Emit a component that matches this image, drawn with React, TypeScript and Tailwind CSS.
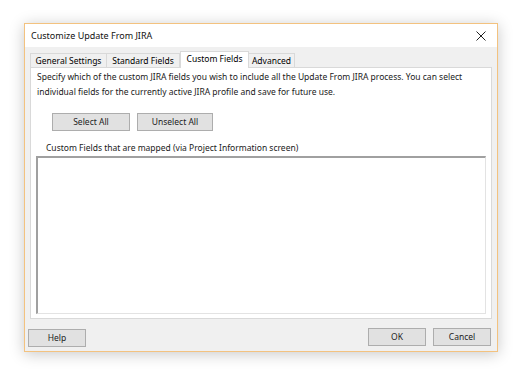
const font = { fontFamily: '"Noto Sans", "Segoe UI", sans-serif' };

function WinButton({ label, className }: { label: string; className: string }) {
  return (
    <button className={`h-[18px] bg-[#e1e1e1] border border-[#adadad] text-[8.5px] leading-none text-[#222] flex items-center justify-center ${className}`}>
      {label}
    </button>
  );
}

function Tab({ label, active, className }: { label: string; active?: boolean; className: string }) {
  if (active) {
    return (
      <div className={`h-[17px] bg-white border border-b-0 border-[#d9d9d9] flex items-start justify-center pt-[1px] text-[8.5px] leading-[12px] whitespace-nowrap relative z-10 -mb-px ${className}`}>
        {label}
      </div>
    );
  }
  return (
    <div className={`h-[14px] bg-[#f0f0f0] border border-b-0 border-[#d9d9d9] flex items-end justify-center text-[8.5px] leading-[12px] whitespace-nowrap ${className}`}>
      {label}
    </div>
  );
}

export default function App() {
  return (
    <div className="w-[527px] h-[378px] bg-white overflow-hidden text-[#000]" style={font}>
      <div className="ml-[24px] mt-[23px] w-[474px] h-[329px] border border-[#f3c27f] bg-[#f0f0f0] shadow-[0_2px_14px_rgba(0,0,0,0.22)] flex flex-col">
        {/* title bar */}
        <div className="h-[23px] bg-white flex items-center justify-between pl-[6px] pr-[11px] shrink-0">
          <span className="text-[9px] leading-none text-[#111]">Customize Update From JIRA</span>
          <svg className="w-[10px] h-[10px]" viewBox="0 0 10 10" fill="none">
            <path d="M0.5 0.5l9 9M9.5 0.5l-9 9" stroke="#222" strokeWidth="1" />
          </svg>
        </div>

        {/* tabs */}
        <div className="flex items-end pl-[5px] mt-[4px] h-[16px] shrink-0">
          <Tab label="General Settings" className="w-[77px]" />
          <Tab label="Standard Fields" className="w-[73px] border-l-0" />
          <Tab label="Custom Fields" active className="w-[69px]" />
          <Tab label="Advanced" className="w-[46px] border-l-0" />
        </div>

        {/* page */}
        <div className="ml-[5px] w-[462px] h-[252px] bg-white border border-[#d9d9d9] flex flex-col shrink-0">
          <p className="pl-[6px] pr-[8px] pt-[1px] text-[8.5px] leading-[15px] text-[#1a1a1a]">
            Specify which of the custom JIRA fields you wish to include all the Update From JIRA process. You can select individual fields for the currently active JIRA profile and save for future use.
          </p>
          <div className="flex gap-[7px] ml-[21px] mt-[14px]">
            <WinButton label="Select All" className="w-[78px]" />
            <WinButton label="Unselect All" className="w-[76px]" />
          </div>
          <div className="ml-[15px] mt-[9px] text-[8.5px] leading-[15px] text-[#1a1a1a]">
            Custom Fields that are mapped (via Project Information screen)
          </div>
          <div className="ml-[5px] mt-[1px] w-[450px] h-[158px] bg-white border-t-2 border-l-2 border-t-[#a0a0a0] border-l-[#a0a0a0] border-r border-b border-r-[#e3e3e3] border-b-[#e3e3e3]" />
        </div>

        {/* footer */}
        <div className="flex items-start mt-[9px] pl-[3px] pr-[6px]">
          <WinButton label="Help" className="w-[58px] mt-[1px]" />
          <div className="flex-1" />
          <WinButton label="OK" className="w-[58px]" />
          <WinButton label="Cancel" className="w-[58px] ml-[7px]" />
        </div>
      </div>
    </div>
  );
}
